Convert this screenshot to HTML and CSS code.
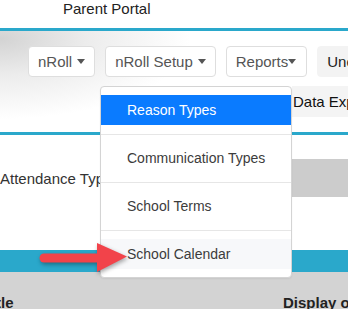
FILE: index.html
```html
<!DOCTYPE html>
<html lang="en">
<head>
    <meta charset="UTF-8">
    <meta name="viewport" content="width=device-width, initial-scale=1.0">
    <title>nRoll Setup</title>
    <link rel="stylesheet" href="styles.css">
</head>
<body>
    <div class="page">
        <div class="portal-bar">Parent Portal</div>

        <div class="nav-area">
            <div class="nav-row">
                <div class="nav-btn">nRoll <span class="caret"></span></div>
                <div class="nav-btn">nRoll Setup <span class="caret"></span></div>
                <div class="nav-btn">Reports<span class="caret"></span></div>
                <div class="nav-btn nav-btn-plain">Unenrolled</div>
            </div>
            <div class="nav-row2">
                <div class="sub-tab">Data Export</div>
            </div>
        </div>

        <div class="att-row">
            <div class="att-title">Attendance Types</div>
            <div class="att-box"></div>
        </div>

        <div class="teal-band"></div>

        <div class="table-head">
            <div class="col-title">Title</div>
            <div class="col-display">Display order</div>
        </div>

        <!-- open dropdown from "nRoll Setup" -->
        <div class="dropdown-menu">
            <div class="dropdown-item active">Reason Types</div>
            <div class="dropdown-divider"></div>
            <div class="dropdown-item">Communication Types</div>
            <div class="dropdown-divider"></div>
            <div class="dropdown-item">School Terms</div>
            <div class="dropdown-divider"></div>
            <div class="dropdown-item hover">School Calendar</div>
        </div>

        <svg class="arrow" width="100" height="40" viewBox="0 0 100 40">
            <line x1="8" y1="18" x2="66" y2="18" stroke="#f2434a" stroke-width="9" stroke-linecap="round"/>
            <polygon points="61,3 91,16.5 61,32" fill="#f2434a"/>
        </svg>
    </div>
</body>
</html>
```

FILE: styles.css
```css
body {
    margin: 0;
    font-family: "Liberation Sans", Arial, sans-serif;
    background-color: #fff;
    color: #333;
    overflow: hidden;
}
.page {
    position: relative;
    height: 309px;
    overflow: hidden;
}
.portal-bar {
    height: 28px;
    padding-left: 63px;
    font-size: 15px;
    line-height: 17px;
    color: #222;
    border-bottom: 3px solid #2aa8cb;
}
.nav-area {
    height: 101px;
    border-bottom: 3px solid #2aa8cb;
    background: radial-gradient(ellipse 190px 80px at 0 8px, #d3d3d3 0%, #ececec 45%, #fff 100%);
}
.nav-row {
    display: flex;
    gap: 10px;
    padding: 15px 0 0 28px;
    white-space: nowrap;
}
.nav-btn {
    display: flex;
    align-items: center;
    gap: 5px;
    height: 29px;
    padding: 0 9px;
    font-size: 15px;
    color: #555;
    background-color: #fff;
    border: 1px solid #dedede;
    border-radius: 4px;
    flex-shrink: 0;
}
.nav-btn:nth-child(3) {
    gap: 0;
    padding-right: 10px;
}
.nav-btn-plain {
    color: #222;
    background-color: #f3f3f3;
    border-color: #f3f3f3;
}
.caret {
    width: 0;
    height: 0;
    border-left: 4px solid transparent;
    border-right: 4px solid transparent;
    border-top: 5px solid #555;
}
.nav-row2 {
    display: flex;
    margin-top: 9px;
    padding-left: 292px;
}
.sub-tab {
    height: 31px;
    line-height: 31px;
    padding: 0 6px 0 1px;
    font-size: 15px;
    color: #111;
    background-color: #f4f4f4;
    white-space: nowrap;
}
.att-row {
    display: grid;
    grid-template-columns: 292px 1fr;
    align-items: center;
    margin-top: 24px;
    height: 38px;
}
.att-title {
    font-size: 15px;
    color: #333;
    padding-top: 1px;
    white-space: nowrap;
}
.att-box {
    height: 38px;
    background-color: #cccccc;
}
.teal-band {
    margin-top: 53px;
    height: 22px;
    background-color: #2aa8cb;
}
.table-head {
    display: grid;
    grid-template-columns: 283px 1fr;
    height: 37px;
    padding-top: 22px;
    background-color: #d3d3d3;
    font-size: 15px;
    font-weight: bold;
    color: #222;
    white-space: nowrap;
}
.col-title {
    margin-left: -17px;
}
.dropdown-menu {
    position: absolute;
    top: 86px;
    left: 100px;
    width: 190px;
    padding: 8px 0;
    background-color: #fff;
    border: 1px solid #d4d4d4;
    border-radius: 4px;
    box-shadow: 0 1px 2px rgba(0, 0, 0, 0.06);
}
.dropdown-item {
    height: 30px;
    line-height: 30px;
    padding-left: 26px;
    font-size: 14px;
    color: #3c3c3c;
}
.dropdown-item.active {
    color: #fff;
    background-color: #0a7bff;
}
.dropdown-item.hover {
    background-color: #f7f8fa;
}
.dropdown-divider {
    height: 1px;
    margin: 9px 0 8px;
    background-color: #e6e6e6;
}
.arrow {
    position: absolute;
    top: 240px;
    left: 36px;
    filter: drop-shadow(1px 2px 2px rgba(0, 0, 0, 0.35));
}
```
